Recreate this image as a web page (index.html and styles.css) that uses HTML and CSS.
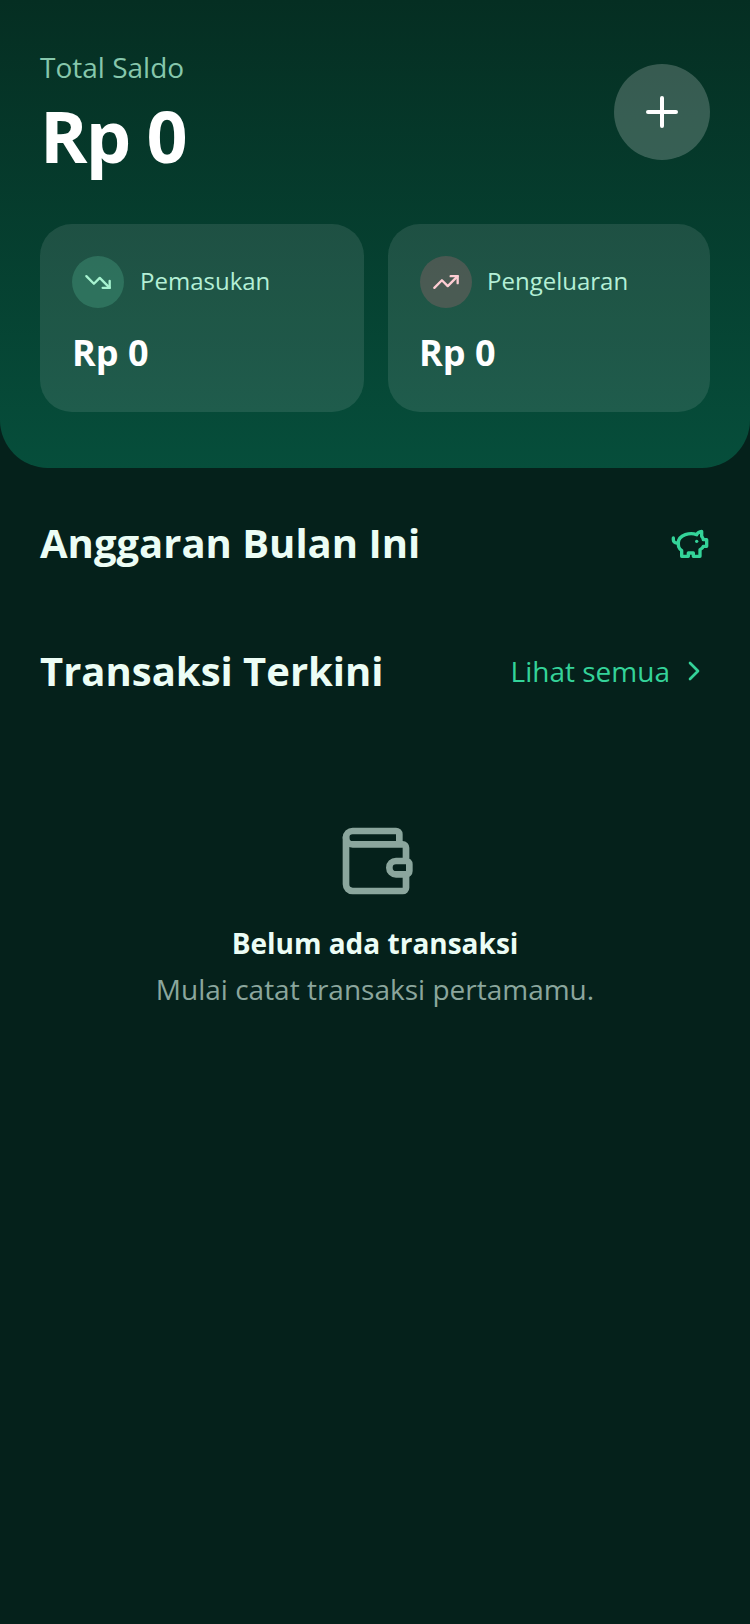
FILE: index.html
```html
<!DOCTYPE html>
<html lang="id">
<head>
    <meta charset="UTF-8">
    <meta name="viewport" content="width=device-width, initial-scale=1.0">
    <title>Dompet</title>
    <link rel="stylesheet" href="styles.css">
</head>
<body>
    <header class="hero">
        <div class="hero-top">
            <div>
                <p class="balance-label">Total Saldo</p>
                <p class="balance-value">Rp 0</p>
            </div>
            <button class="add-btn" aria-label="Tambah">
                <svg width="48" height="48" viewBox="0 0 24 24" fill="none" stroke="#fff" stroke-width="2" stroke-linecap="round"><path d="M5 12h14"/><path d="M12 5v14"/></svg>
            </button>
        </div>
        <div class="stats">
            <div class="stat-card stat-income">
                <div class="stat-head">
                    <span class="stat-icon icon-in">
                        <svg width="28" height="28" viewBox="0 0 24 24" fill="none" stroke="#a7f3d0" stroke-width="2" stroke-linecap="round" stroke-linejoin="round"><path d="M22 17l-8.5-8.5-5 5L2 7"/><path d="M16 17h6v-6"/></svg>
                    </span>
                    <span class="stat-label">Pemasukan</span>
                </div>
                <p class="stat-value">Rp 0</p>
            </div>
            <div class="stat-card stat-expense">
                <div class="stat-head">
                    <span class="stat-icon icon-out">
                        <svg width="28" height="28" viewBox="0 0 24 24" fill="none" stroke="#fecdd3" stroke-width="2" stroke-linecap="round" stroke-linejoin="round"><path d="M22 7l-8.5 8.5-5-5L2 17"/><path d="M16 7h6v6"/></svg>
                    </span>
                    <span class="stat-label">Pengeluaran</span>
                </div>
                <p class="stat-value">Rp 0</p>
            </div>
        </div>
    </header>

    <main class="content">
        <section class="section-row budget-row">
            <h2>Anggaran Bulan Ini</h2>
            <svg width="40" height="40" viewBox="0 0 24 24" fill="none" stroke="#34d399" stroke-width="2" stroke-linecap="round" stroke-linejoin="round"><path d="M19 5c-1.5 0-2.8 1.4-3 2-3.5-1.5-11-.3-11 5 0 1.8 0 3 2 4.5V20h4v-2h3v2h4v-4c1-.5 1.7-1 2-2h2v-4h-2c0-1-.5-1.5-1-2V5z"/><path d="M2 9v1c0 1.1.9 2 2 2h1"/><path d="M16 11h.01"/></svg>
        </section>

        <section class="section-row recent-row">
            <h2>Transaksi Terkini</h2>
            <a class="see-all" href="#">
                Lihat semua
                <svg width="32" height="32" viewBox="0 0 24 24" fill="none" stroke="#34d399" stroke-width="2" stroke-linecap="round" stroke-linejoin="round"><path d="M9 18l6-6-6-6"/></svg>
            </a>
        </section>

        <section class="empty">
            <svg class="empty-icon" width="80" height="80" viewBox="0 0 24 24" fill="none" stroke="#8ba69d" stroke-width="2" stroke-linecap="round" stroke-linejoin="round"><path d="M19 7V4a1 1 0 0 0-1-1H5a2 2 0 0 0 0 4h15a1 1 0 0 1 1 1v4h-3a2 2 0 0 0 0 4h3a1 1 0 0 0 1-1v-2a1 1 0 0 0-1-1"/><path d="M3 5v14a2 2 0 0 0 2 2h15a1 1 0 0 0 1-1v-4"/></svg>
            <p class="empty-title">Belum ada transaksi</p>
            <p class="empty-text">Mulai catat transaksi pertamamu.</p>
        </section>
    </main>
</body>
</html>
```

FILE: styles.css
```css
* {
    margin: 0;
    padding: 0;
    box-sizing: border-box;
}

html, body {
    width: 100%;
    min-height: 100vh;
    background-color: #05211b;
    font-family: "Open Sans", "Noto Sans", sans-serif;
}

.hero {
    height: 468px;
    padding: 48px 40px 0;
    background: linear-gradient(180deg, #052e22, #064e3b);
    border-radius: 0 0 48px 48px;
}

.hero-top {
    display: flex;
    justify-content: space-between;
    align-items: flex-start;
    height: 128px;
    margin-bottom: 48px;
}

.balance-label {
    font-size: 28px;
    line-height: 38px;
    color: #86c7ac;
}

.balance-value {
    margin-top: 9px;
    font-size: 72px;
    line-height: 80px;
    font-weight: 700;
    letter-spacing: -0.025em;
    color: #fff;
}

.add-btn {
    display: flex;
    align-items: center;
    justify-content: center;
    width: 96px;
    height: 96px;
    margin-top: 16px;
    border: none;
    border-radius: 50%;
    background-color: rgba(255, 255, 255, 0.2);
}

.stats {
    display: flex;
    gap: 24px;
}

.stat-card {
    height: 188px;
    padding: 32px;
    border-radius: 32px;
    background-color: rgba(255, 255, 255, 0.1);
}

.stat-income {
    width: 323.5px;
}

.stat-expense {
    width: 322.5px;
}

.stat-expense .stat-label,
.stat-expense .stat-value {
    margin-left: -0.5px;
}

.stat-head {
    display: flex;
    align-items: center;
    gap: 16px;
    margin-bottom: 21px;
}

.stat-icon {
    display: flex;
    align-items: center;
    justify-content: center;
    width: 52px;
    height: 52px;
    border-radius: 50%;
}

.icon-in {
    background-color: rgba(110, 231, 183, 0.2);
}

.icon-out {
    background-color: rgba(251, 113, 133, 0.2);
}

.stat-label {
    padding-bottom: 3px;
    font-size: 24px;
    color: #b4efd6;
}

.stat-value {
    font-size: 36px;
    line-height: 48px;
    font-weight: 700;
    color: #fff;
}

.content {
    padding: 0 40px;
}

.section-row {
    display: flex;
    justify-content: space-between;
    align-items: center;
}

.budget-row {
    height: 56px;
    margin-top: 47px;
}

.recent-row {
    height: 56px;
    margin-top: 72px;
}

h2 {
    font-size: 40px;
    line-height: 56px;
    font-weight: 700;
    color: #ecfdf5;
}

.see-all {
    display: flex;
    align-items: center;
    gap: 8px;
    font-size: 28px;
    color: #34d399;
    text-decoration: none;
}

.empty {
    display: flex;
    flex-direction: column;
    align-items: center;
    margin-top: 122px;
}

.empty-icon {
    margin-left: 2px;
}

.empty-title {
    margin-top: 22px;
    font-size: 28px;
    line-height: 40px;
    font-weight: 700;
    color: #ecfdf5;
}

.empty-text {
    margin-top: 6px;
    font-size: 28px;
    line-height: 40px;
    color: #8ba69d;
}
```
